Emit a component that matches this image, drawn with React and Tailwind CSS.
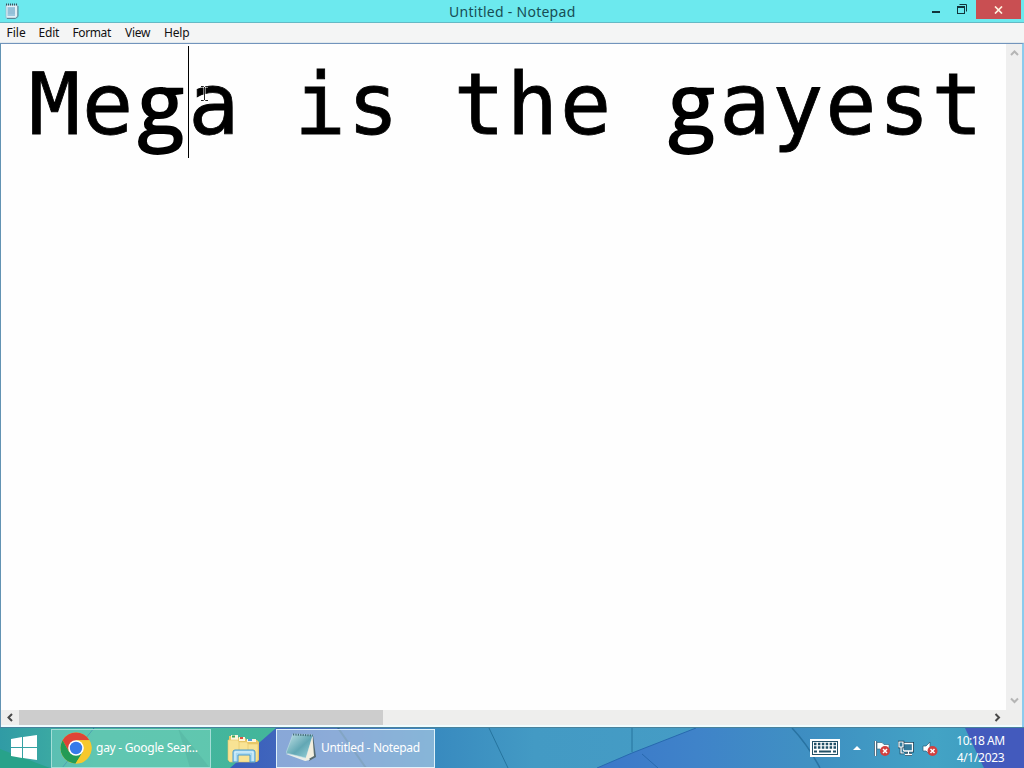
import React from "react";

const Letter = ({ children, className = "" }) => (
    <span className={`inline-block w-[53.1px] text-center ${className}`}>{children}</span>
);

const SmallNote = () => (
    <svg width="14" height="16" viewBox="0 0 14 16">
        <path d="M1 2H12.5V13L11 15H1Z" fill="#e2eff5" stroke="#8fb8c8" strokeWidth=".7" />
        <path d="M2.5 4H10V13H2.5Z" fill="#9cc8df" />
        <path d="M3 6H10M3 8H10M3 10H10" stroke="#84afcb" strokeWidth=".6" />
        <path d="M13 3V13.5L10.5 15.5H2" stroke="#5f8494" fill="none" />
        <path d="M1 1.5H13" stroke="#38535f" strokeWidth="2" strokeDasharray="1 1" />
    </svg>
);

const TitleBar = () => (
    <div className="relative flex h-[23px] shrink-0 items-start border-b border-[#65b9c5] bg-[#6ce9ee]">
        <div className="w-[120px] pt-[3px] pl-[5px]"><SmallNote /></div>
        <div className="flex-1 pl-[329px] text-[14px] leading-[23px] tracking-[0.27px] whitespace-nowrap text-[#174d54]">
            Untitled - Notepad
        </div>
        <svg className="w-[46px]" height="20" viewBox="0 0 46 20">
            <path d="M2 12H10" stroke="#12343b" strokeWidth="2" />
            <path d="M29.5 4.5H36.5V11.5" fill="none" stroke="#12343b" />
            <rect x="27.5" y="6.5" width="7" height="7" fill="none" stroke="#12343b" />
            <path d="M27 7H35" stroke="#12343b" strokeWidth="2" />
        </svg>
        <div className="mr-[3px] flex h-[19px] w-[45px] items-center justify-center bg-[#c94f52]">
            <svg width="9" height="8" viewBox="0 0 9 8">
                <path d="M1 .5L8 7.5M8 .5L1 7.5" stroke="#fff1df" strokeWidth="1.7" />
            </svg>
        </div>
    </div>
);

const MenuBar = () => (
    <div className="flex h-[20px] shrink-0 border-b border-[#e1e9ed] bg-[#f4f5f5] text-[12px] leading-[20px] text-[#111]">
        <span className="w-[32px] pl-[6.5px]">File</span>
        <span className="w-[34px] pl-[6.5px] tracking-[-0.2px]">Edit</span>
        <span className="w-[52px] pl-[6.5px] tracking-[-0.4px]">Format</span>
        <span className="w-[39px] pl-[7px] tracking-[-0.3px]">View</span>
        <span className="pl-[7px] tracking-[-0.2px]">Help</span>
    </div>
);

const Editor = () => (
    <div className="relative min-w-0 flex-1 overflow-hidden bg-[#fefefe]">
        <div className="h-[112px] pt-px pl-[27px] font-['DejaVu_Sans_Mono','Liberation_Mono',monospace] text-[85px] leading-[112px] whitespace-pre text-black [-webkit-text-stroke:0.8px_#000]">
            {"Mega is the gayest".split("").map((c, i) => (
                <Letter key={i} className={c === "g" ? "font-['Open_Sans',sans-serif] [-webkit-text-stroke:2px_#000]" : ""}>{c === " " ? "\u00a0" : c}</Letter>
            ))}
        </div>
        {/* text caret and mouse pointer */}
        <div className="absolute top-[2px] left-[187px] h-[112px] w-px bg-black" />
        <svg className="absolute top-[41px] left-[199px]" width="9" height="17" viewBox="0 0 9 17">
            <path d="M1 1.5H3.5L4.5 2.5L5.5 1.5H8M4.5 2V15M1 15.5H3.5L4.5 14.5L5.5 15.5H8" fill="none" stroke="#fff" strokeWidth="2" />
            <path d="M1 1.5H3.5L4.5 2.5L5.5 1.5H8M4.5 2V15M1 15.5H3.5L4.5 14.5L5.5 15.5H8" fill="none" stroke="#222" />
        </svg>
    </div>
);

const Arrow = ({ d, color }) => (
    <svg width="9" height="9" viewBox="0 0 9 9">
        <path d={d} fill="none" stroke={color} strokeWidth="2" />
    </svg>
);

const ChromeIcon = () => (
    <svg width="32" height="32" viewBox="0 0 32 32">
        <circle cx="16" cy="16" r="15.5" fill="#f4c62d" />
        <path d="M2.6 8.2A15.5 15.5 0 0 1 29.4 8.2L16 8.2L9.2 20Z" fill="#df4437" />
        <path d="M2.6 8.2A15.5 15.5 0 0 0 15.6 31.5L22.8 20L9.2 20Z" fill="#239b55" />
        <path d="M16 8.2H29.4A15.5 15.5 0 0 1 15.6 31.5L22.8 20Z" fill="#f6c82d" />
        <circle cx="16" cy="16" r="7.8" fill="#fff" />
        <circle cx="16" cy="16" r="6.2" fill="#367bea" />
    </svg>
);

const FolderIcon = () => (
    <svg width="34" height="30" viewBox="0 0 34 30">
        <path d="M2 5V2H10L12 4H18L20 6H30L32 8V26L30 28H2Z" fill="#e9c865" />
        <path d="M4 1H11V6H4ZM12 3H18V7H12ZM20 5H29V8H20Z" fill="#fff6dc" />
        <path d="M5 1.5H8V3.5H5Z" fill="#3da557" />
        <path d="M13 3H16V5H13Z" fill="#dd5141" />
        <path d="M21 5H25V7H21Z" fill="#4d9fdd" />
        <path d="M1 6H11L12 8H20L21 10H31V26L28 28H3L1 26Z" fill="#f8e394" stroke="#e5c66c" strokeWidth=".6" />
        <path d="M12 8V16M21 10V16" stroke="#ead078" />
        <path d="M6 28V18Q6 16 8 16H26Q28 16 28 18V28H23V21H11V28Z" fill="#a7d9f1" stroke="#4b9acc" />
        <path d="M8 27V18H26V27" fill="none" stroke="#e4f6fc" />
    </svg>
);

const NotepadIcon = () => (
    <svg width="31" height="30" viewBox="0 0 31 30">
        <defs>
            <linearGradient id="note" x1="0" y1="0" x2="1" y2="1">
                <stop offset="0" stopColor="#c5e4e8" />
                <stop offset=".55" stopColor="#62a7b4" />
                <stop offset="1" stopColor="#9fd6dc" />
            </linearGradient>
        </defs>
        <path d="M27 2L30 24L23 28Z" fill="#566a70" />
        <path d="M0 21L19 28L24 27L20 22Z" fill="#e9eee9" />
        <path d="M7 1L27 2L20 25L0 20Z" fill="url(#note)" stroke="#c0dfe5" strokeWidth=".6" />
        <path d="M26.5 3L28 23L19 28Z" fill="#f3efdf" />
        <path d="M7 1.5L27 2.5" stroke="#456d78" strokeWidth="2" strokeDasharray="1.2 1.2" />
    </svg>
);

const Wallpaper = () => (
    <svg className="absolute inset-0" width="1024" height="41" viewBox="0 0 1024 41">
        <defs>
            <linearGradient id="green">
                <stop offset="0" stopColor="#309ba5" />
                <stop offset=".35" stopColor="#44b5a1" />
                <stop offset="1" stopColor="#43b69a" />
            </linearGradient>
            <linearGradient id="blue">
                <stop offset="0" stopColor="#388abf" />
                <stop offset=".17" stopColor="#439ac4" />
                <stop offset=".45" stopColor="#459cc5" />
                <stop offset=".6" stopColor="#3d8bc1" />
                <stop offset=".85" stopColor="#43a3c5" />
                <stop offset="1" stopColor="#3b99bd" />
            </linearGradient>
            <linearGradient id="deep">
                <stop offset="0" stopColor="#385dbc" />
                <stop offset=".5" stopColor="#4a70bd" />
                <stop offset="1" stopColor="#3c89bf" />
            </linearGradient>
            <linearGradient id="leaf">
                <stop offset="0" stopColor="#3b78c9" />
                <stop offset=".45" stopColor="#3f83c9" />
                <stop offset="1" stopColor="#4092c2" />
            </linearGradient>
        </defs>
        <rect width="280" height="41" fill="url(#green)" />
        <path d="M0 22L50 41H0Z" fill="#28a28a" />
        <path d="M94 1L62 41" stroke="#2877a0" />
        <path d="M178 1L210 41H190Z" fill="#3aa491" />
        <rect x="434" width="590" height="41" fill="url(#blue)" />
        <path d="M276 1L230 41H435V1Z" fill="url(#deep)" />
        <path d="M338 1L366 41" stroke="#315f8c" strokeWidth="2" />
        <path d="M489 1L508 41M632 1V25" stroke="#26749e" fill="none" />
        <path d="M696 1L632 26L597 41H818Q808 18 792 1Z" fill="url(#leaf)" />
        <path d="M696 1L632 26L597 41" fill="none" stroke="#2769af" />
        <path d="M642 27L658 41" stroke="#2969ae" />
        <path d="M792 1Q808 18 820 41" fill="none" stroke="#2873a2" strokeWidth="1.5" />
        <path d="M965 1L984 41H1024V1Z" fill="#435abd" />
        <rect width="1024" height="1" fill="#48829c" />
    </svg>
);

const ErrorBadge = ({ x }) => (
    <g>
        <circle cx={x} cy="11" r="5" fill="#d2403f" />
        <path d={`M${x - 2} 9l4 4m0-4l-4 4`} stroke="#fff" strokeWidth="1.5" />
    </g>
);

const Tray = () => (
    <div className="flex items-center">
        <svg width="30" height="20" viewBox="0 0 30 20">
            <rect x=".75" y="1.75" width="28.5" height="16.5" fill="#fff" stroke="#fff" strokeWidth="1.5" />
            <rect x="2.5" y="3.5" width="25" height="13" fill="#fff" stroke="#225066" />
            <path d="M4 6H26M4 9.5H26" stroke="#225066" strokeWidth="2.4" strokeDasharray="2.5 1.4" />
            <path d="M4 13.5H7M9 13.5H21M23 13.5H26" stroke="#225066" strokeWidth="2" />
        </svg>
        <svg className="ml-[13px]" width="8" height="5" viewBox="0 0 8 5"><path d="M0 5L4 1L8 5Z" fill="#fff" /></svg>
        <svg className="mt-[2px] ml-[13px]" width="16" height="17" viewBox="0 0 16 17">
            <path d="M1.5 1V16" stroke="#214b65" strokeWidth="3" />
            <path d="M1.5 1V16" stroke="#fff" strokeWidth="1.5" />
            <path d="M3 2.5H8L10 4.5H15V11H8L6 9H3Z" fill="#f8ffff" stroke="#315d75" strokeWidth=".6" />
            <ErrorBadge x={11} />
        </svg>
        <svg className="mt-[2px] ml-[8px]" width="16" height="17" viewBox="0 0 16 17">
            <path d="M5 3.5H14.5V11H5ZM7 14.5H14M10.5 11V14" fill="#347b9c" stroke="#173e54" strokeWidth="3" />
            <path d="M5 3.5H14.5V11H5ZM7 14.5H14M10.5 11V14" fill="#347b9c" stroke="#fff" strokeWidth="1.3" />
            <path d="M1 2H5V7H1ZM3 7V13H6" fill="#347b9c" stroke="#173e54" strokeWidth="2.6" />
            <path d="M1 2H5V7H1ZM3 7V13H6" fill="#347b9c" stroke="#fff" strokeWidth="1.2" />
        </svg>
        <svg className="mt-[2px] ml-[8px]" width="16" height="17" viewBox="0 0 16 17">
            <path d="M1 6H4L8 2V15L4 11H1Z" fill="#fff" stroke="#285b75" strokeWidth=".7" />
            <ErrorBadge x={10.5} />
        </svg>
        <div className="mt-[2px] mr-[16px] ml-[15px] w-[55px] text-center text-[12px] leading-[17px] whitespace-nowrap text-white">
            <div className="tracking-[-0.5px]">10:18 AM</div>
            <div className="tracking-[-0.3px]">4/1/2023</div>
        </div>
    </div>
);

const Taskbar = () => (
    <div className="relative h-[41px] shrink-0 overflow-hidden text-white">
        <Wallpaper />
        <div className="relative flex h-full items-center">
            <div className="w-[51px] pl-[11px]">
                <svg width="26" height="26" viewBox="0 0 26 26" fill="#fff">
                    <path d="M0 4L11 2V12H0ZM12 2L26 0V12H12ZM0 13H11V23L0 21ZM12 13H26V25L12 23Z" />
                </svg>
            </div>
            <div className="mt-px flex h-[39px] w-[160px] items-center border border-[#a4ded7] bg-[#8be1cb]/40 pl-[8px] text-[12px]">
                <ChromeIcon />
                <span className="ml-[4px] tracking-[-0.25px] whitespace-nowrap">gay - Google Sear...</span>
            </div>
            <div className="w-[65px] pt-[2px] pl-[16px]"><FolderIcon /></div>
            <div className="mt-px flex h-[39px] w-[159px] items-center border border-[#e0f2fa] bg-[#b9d3e9]/60 pl-[9px] text-[12px]">
                <NotepadIcon />
                <span className="ml-[4px] tracking-[-0.3px] whitespace-nowrap">Untitled - Notepad</span>
            </div>
            <div className="ml-auto"><Tray /></div>
        </div>
    </div>
);

const App = () => {
    return (
        <div className="flex h-[768px] w-[1024px] flex-col overflow-hidden bg-white font-['Noto_Sans','Open_Sans',sans-serif]">
            <TitleBar />
            <MenuBar />
            <div className="flex min-h-0 flex-1 flex-col border-t border-r-2 border-l border-t-[#7294bc] border-r-[#8ccbed] border-l-[#6293b3]">
                <div className="flex min-h-0 flex-1">
                    <Editor />
                    <div className="flex w-[16px] flex-col items-center justify-between bg-[#efefef] py-[5px]">
                        <Arrow d="M1 6L4.5 2.5L8 6" color="#b5b5b5" />
                        <Arrow d="M1 2.5L4.5 6L8 2.5" color="#b5b5b5" />
                    </div>
                </div>
                <div className="flex h-[15px] shrink-0 items-center bg-[#eeeeed]">
                    <div className="flex w-[18px] justify-center"><Arrow d="M6 1L2.5 4.5L6 8" color="#484848" /></div>
                    <div className="h-full w-[364px] bg-[#cdcdcd]" />
                    <div className="mr-[20px] ml-auto"><Arrow d="M2.5 1L6 4.5L2.5 8" color="#484848" /></div>
                </div>
                <div className="h-[2px] shrink-0 bg-[#effcff]" />
            </div>
            <Taskbar />
        </div>
    );
};

export default App;
